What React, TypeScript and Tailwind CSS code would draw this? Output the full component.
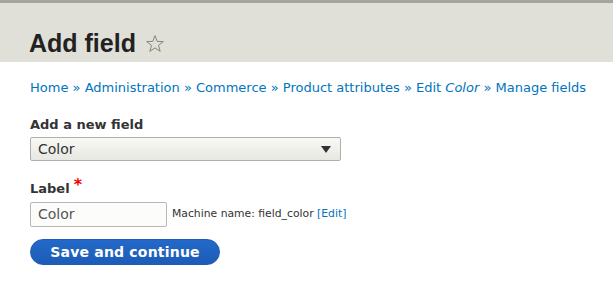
export default function App() {
  const crumbs = ["Home", "Administration", "Commerce", "Product attributes"];

  return (
    <div className="min-h-[306px] bg-white font-['DejaVu_Sans',sans-serif] text-[#333]">
      <div className="h-[62px] border-t-[3px] border-[#a5a5a0] bg-[#e0e0d8] pl-[29px] pt-[25px]">
        <h1 className="flex items-center font-['Liberation_Sans',sans-serif] text-[25px] leading-[30px] font-bold text-[#222]">
          Add field
          <svg className="ml-[9px] mt-[1px]" width="20" height="20" viewBox="0 0 20 20">
            <path
              d="M10 1.6 L12.2 7.4 L18.3 7.6 L13.5 11.4 L15.2 17.4 L10 13.9 L4.8 17.4 L6.5 11.4 L1.7 7.6 L7.8 7.4 Z"
              fill="none"
              stroke="#85857c"
              strokeWidth="1"
              strokeLinejoin="round"
            />
          </svg>
        </h1>
      </div>

      <div className="px-[30px]">
        <nav className="mt-[18px] whitespace-nowrap text-[13px] leading-[16px] text-[#0074bd]">
          {crumbs.map((c) => (
            <span key={c}>
              <a href="#">{c}</a> »{" "}
            </span>
          ))}
          <a href="#">
            Edit <em>Color</em>
          </a>{" "}
          » <a href="#">Manage fields</a>
        </nav>

        <div className="mt-[21px]">
          <label className="block text-[13px] leading-[16px] font-bold text-[#333]">Add a new field</label>
          <div className="mt-[4px] flex h-[24px] w-[311px] items-center justify-between rounded-[2px] border border-[#b0b0a8] bg-gradient-to-b from-[#f8f8f5] to-[#e8e8e2] pl-[7px] pr-[9px] text-[14px] text-[#333]">
            <span>Color</span>
            <svg width="10" height="7" viewBox="0 0 10 7">
              <path d="M0 0 H10 L5 7 Z" fill="#333" />
            </svg>
          </div>
        </div>

        <div className="mt-[20px]">
          <label className="flex text-[13px] leading-[16px] font-bold text-[#333]">
            Label
            <span className="ml-[4px] -mt-[4px] text-[16px] text-[#e00]">*</span>
          </label>
          <div className="mt-[5px] flex items-center">
            <div className="flex h-[25px] w-[137px] items-center rounded-[2px] border border-[#b8b8b8] bg-[#fcfcfa] pl-[7px] text-[14px] text-[#555]">
              Color
            </div>
            <span className="ml-[5px] text-[10.8px] text-[#333]">
              Machine name: field_color <span className="text-[#0074bd]">[Edit]</span>
            </span>
          </div>
        </div>

        <button className="mt-[12px] flex h-[26px] w-[190px] items-center justify-center rounded-full border border-[#1e5ab8] bg-gradient-to-b from-[#2369c9] to-[#1d5cb7] text-[14px] font-bold tracking-[0.2px] text-white">
          Save and continue
        </button>
      </div>
    </div>
  );
}
